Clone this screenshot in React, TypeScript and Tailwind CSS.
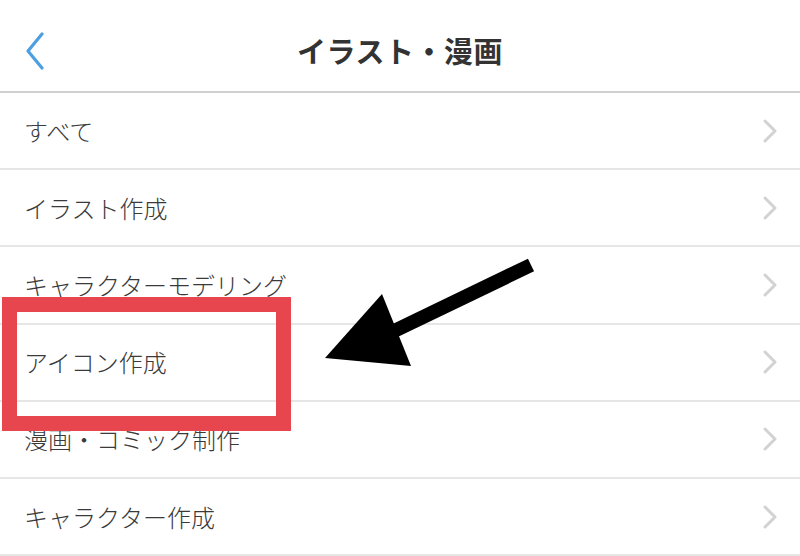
const items = [
  "すべて",
  "イラスト作成",
  "キャラクターモデリング",
  "アイコン作成",
  "漫画・コミック制作",
  "キャラクター作成",
];

export default function App() {
  return (
    <div
      className="relative h-[556px] w-[800px] overflow-hidden bg-white text-[#333333]"
      style={{ fontFamily: '"Noto Sans CJK JP", "Noto Sans", sans-serif' }}
    >
      {/* ヘッダー */}
      <header className="flex h-[93px] items-center border-b-2 border-[#cfcfcf] px-[24px] pt-[10px]">
        <button type="button" className="flex h-[40px] w-[30px] items-center">
          <svg width="22" height="38" viewBox="0 0 22 38" fill="none">
            <path
              d="M18 2 L4 19 L18 36"
              stroke="#4d9fdf"
              strokeWidth="3.2"
              strokeLinecap="round"
              strokeLinejoin="round"
            />
          </svg>
        </button>
        <h1 className="flex-1 pr-[30px] text-center text-[29px] font-bold tracking-[0.5px]">
          イラスト・漫画
        </h1>
      </header>

      {/* カテゴリ一覧 */}
      <ul>
        {items.map((item) => (
          <li
            key={item}
            className="flex h-[77.2px] items-center justify-between border-b-2 border-[#e6e6e6] pl-[24px] pr-[22px]"
          >
            <span className="text-[24px] font-light text-[#3a3a3a]">{item}</span>
            <svg width="16" height="26" viewBox="0 0 16 26" fill="none">
              <path
                d="M3 3 L13 13 L3 23"
                stroke="#d2d2d2"
                strokeWidth="3"
                strokeLinecap="round"
                strokeLinejoin="round"
              />
            </svg>
          </li>
        ))}
      </ul>

      {/* 注釈: 赤枠と矢印 */}
      <div className="absolute left-[2px] top-[297px] h-[134px] w-[289px] border-[15px] border-[#e8464e]" />
      <svg className="absolute left-0 top-0" width="800" height="556" viewBox="0 0 800 556">
        <line x1="531" y1="265" x2="392" y2="332" stroke="#000" strokeWidth="14" />
        <polygon points="325,358 382,294 411,366" fill="#000" />
      </svg>
    </div>
  );
}
